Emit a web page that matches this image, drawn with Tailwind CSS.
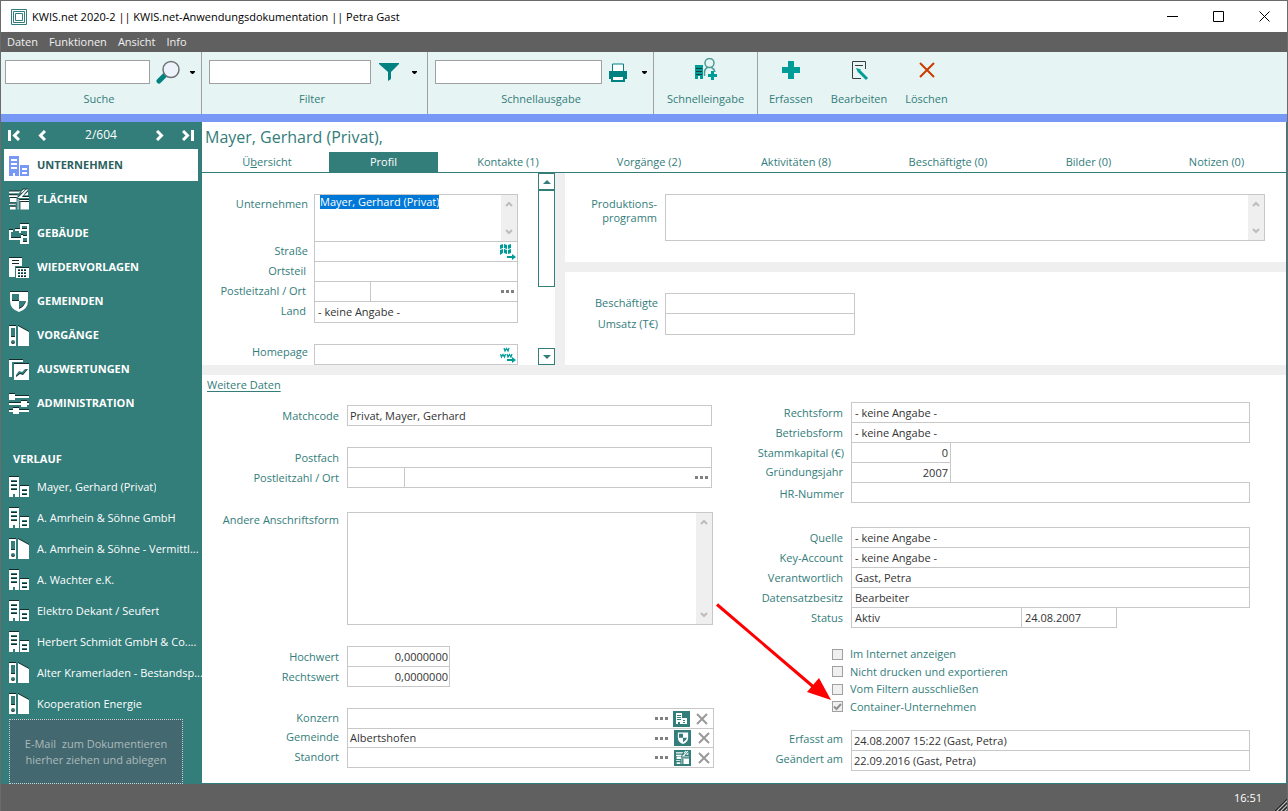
<!DOCTYPE html>
<html lang="de">
<head>
<meta charset="utf-8">
<title>KWIS.net 2020-2</title>
<script src="https://cdn.jsdelivr.net/npm/@tailwindcss/browser@4"></script>
</head>
<body class="font-['Open_Sans','Noto_Sans',sans-serif] text-[11px] leading-4 text-[#337d7a] bg-white">
<svg class="hidden" aria-hidden="true">
  <symbol id="building" viewBox="0 0 20 21"><path fill-rule="evenodd" d="M0 1h10v20H6v-3H4v3H0zM2 4v2h6V4zM2 8v2h6V8zM2 12v2h6v-2zM11 10h9v11h-9zM13 13v2h5v-2zM13 17v2h5v-2z"/></symbol>
  <symbol id="areas" viewBox="0 0 21 21"><path d="M0 2h12l-2 2H0zM0 6h9v2H0zM1 9h7v4H1zM0 15h7v1H0zM1 18h6v3H1zM9 9l3-3 6-6h2l-6 7v1h7v1H9zM9 10h1v11H9zM11 11h10v1H11zM12 13h9v8h-9zM16 6l4-4v4zM13 2l2-2h2l-4 4z"/></symbol>
  <symbol id="plan" viewBox="0 0 20 21"><path fill-rule="evenodd" d="M0 7h4v2H2v6h10v-3h2v1h4V8h-6v2h-2V8H6V6h5V1h9v20h-9v-4H0zM13 3v3h5V3zM14 15v4h4v-4z"/></symbol>
  <symbol id="tasks" viewBox="0 0 20 21"><path fill-rule="evenodd" d="M0 1h13v8h-2H6v11H0zM3 3v1h7V3zM3 6v1h7V6zM7 11h13v10H7zM9 12v2h2v-2zM12 12v2h2v-2zM15 12v2h2v-2zM9 15v2h2v-2zM12 15v2h2v-2zM15 15v2h2v-2zM9 18v2h2v-2zM12 18v2h2v-2zM15 18v2h2v-2z"/></symbol>
  <symbol id="shield" viewBox="0 0 20 21"><path fill-rule="evenodd" d="M1 1h18v9q0 8-9 11Q1 18 1 10zM3 3v7h7V3zM10 10v8q6-3 7-8z"/></symbol>
  <symbol id="folder" viewBox="0 0 20 21"><path fill-rule="evenodd" d="M0 1h7v20H0zM2 3v9h4V3zM2 17a2 2 0 1 0 4 0a2 2 0 1 0-4 0M9 1l11 6v14H9z"/></symbol>
  <symbol id="report" viewBox="0 0 20 21"><path fill-rule="evenodd" d="M0 1h14v2H3v15H0zM5 5h15v16H5zM7 18l4-3 3 1 5-6h-3l-3 3-3-1-3 4z"/></symbol>
  <symbol id="sliders" viewBox="0 0 20 21"><path d="M0 1h6v2h14v2H6v2H0zM0 10h12V8h6v2h2v2h-2v2h-6v-2H0zM0 17h4v-2h6v2h10v2H10v2H4v-2H0z"/></symbol>
  <symbol id="up" viewBox="0 0 8 6"><path d="M1 5l3-3 3 3" fill="none" stroke="currentColor" stroke-width="2"/></symbol>
  <symbol id="down" viewBox="0 0 8 6"><path d="M1 1l3 3 3-3" fill="none" stroke="currentColor" stroke-width="2"/></symbol>
  <symbol id="caret" viewBox="0 0 5 3"><path d="M0 0h5v1L3 3H2L0 1z"/></symbol>
  <symbol id="dots" viewBox="0 0 13 3"><path d="M0 0h3v3H0zM5 0h3v3H5zM10 0h3v3h-3z"/></symbol>
  <symbol id="cross" viewBox="0 0 12 12"><path d="M1 1l10 10M11 1L1 11" fill="none" stroke="currentColor" stroke-width="2"/></symbol>
</svg>

<div class="flex min-h-screen flex-col border-x border-[#6b6b6b]">
  <header class="flex h-8 items-center border-t border-[#6b6b6b] text-black">
    <svg class="ml-[10px] size-4 shrink-0" viewBox="0 0 16 16" fill="none" stroke="#337d7a"><path d="M.5.5h15v15H.5zM2.5 2.5h11v11h-11zM4.5 4.5h7v7h-7z"/></svg>
    <h1 class="ml-[5px] flex-1">KWIS.net 2020-2 || KWIS.net-Anwendungsdokumentation || Petra Gast</h1>
    <button class="flex w-[46px] justify-center" aria-label="Minimieren"><svg class="size-[11px]" viewBox="0 0 11 11"><path d="M0 5h11v1H0z"/></svg></button>
    <button class="flex w-[46px] justify-center" aria-label="Maximieren"><svg class="size-[11px]" viewBox="0 0 11 11" fill="none" stroke="#000"><path d="M.5.5h10v10H.5z"/></svg></button>
    <button class="flex w-[46px] justify-center" aria-label="Schließen"><svg class="size-[11px]" viewBox="0 0 11 11" stroke="#000"><path d="M.5.5l10 10M10.500.5l-10 10"/></svg></button>
  </header>
  <nav class="flex h-5 items-center gap-[11px] bg-[#606060] pl-[6px] text-[#f0f0f0]">
    <button>Daten</button><button>Funktionen</button><button>Ansicht</button><button>Info</button>
  </nav>

  <div class="flex h-[70px] border-b-8 border-[#7799f5] bg-[#e6f4f3]">
    <div class="flex w-[201px] shrink-0 flex-col gap-[7px] border-r border-r-[#a0a0a0] pt-2 pl-1">
      <div class="flex h-6 items-center">
        <input id="suche" class="h-6 w-[145px] border border-[#a0a0a0] bg-white px-1">
        <button class="ml-[6px]" aria-label="Suchen"><svg class="size-6" viewBox="0 0 24 24"><path d="M3 21l7-7" stroke="#008281" stroke-width="5" stroke-linecap="round"/><circle cx="15" cy="9.500" r="8" fill="#eef3fb" stroke="#6e7378" stroke-width="1.500"/></svg></button>
        <button class="ml-[10px]" aria-label="Suchoptionen"><svg class="h-[3px] w-[5px]"><use href="#caret"/></svg></button>
      </div>
      <label for="suche" class="pr-2 text-center">Suche</label>
    </div>
    <div class="flex w-[226px] shrink-0 flex-col gap-[7px] border-r border-r-[#a0a0a0] pt-2 pl-[7px]">
      <div class="flex h-6 items-center">
        <input id="filter" class="h-6 w-[162px] border border-[#a0a0a0] bg-white px-1">
        <button class="ml-2" aria-label="Filtern"><svg class="h-[18px] w-5" viewBox="0 0 20 18" fill="#008281"><path d="M0 0h20v1l-8 8v7l-3 2V9L0 1z"/></svg></button>
        <button class="ml-[13px]" aria-label="Filteroptionen"><svg class="h-[3px] w-[5px]"><use href="#caret"/></svg></button>
      </div>
      <label for="filter" class="pr-3 text-center">Filter</label>
    </div>
    <div class="flex w-[226px] shrink-0 flex-col gap-[7px] border-r border-r-[#a0a0a0] pt-2 pl-[7px]">
      <div class="flex h-6 items-center">
        <input id="ausgabe" class="h-6 w-[167px] border border-[#a0a0a0] bg-white px-1">
        <button class="ml-[7px]" aria-label="Drucken"><svg class="h-[19px] w-[18px]" viewBox="0 0 18 19"><path d="M3.500 1h11v9h-11z" fill="#fff" stroke="#008281"/><path d="M0 8h18v8h-2v3H2v-3H0z" fill="#008281"/><path d="M4 14h10v3H4z" fill="#fff"/></svg></button>
        <button class="ml-[15px]" aria-label="Druckoptionen"><svg class="h-[3px] w-[5px]"><use href="#caret"/></svg></button>
      </div>
      <label for="ausgabe" class="pr-[6px] text-center">Schnellausgabe</label>
    </div>
    <div class="flex w-[104px] shrink-0 justify-center border-r border-r-[#a0a0a0] pt-[6px]">
      <button class="flex flex-col items-center gap-2">
        <svg class="h-[25px] w-[22px]" viewBox="0 0 22 25" fill="none"><path d="M0 7h8v14H5v-3H3v3H0z" fill="#009c98"/><path d="M1 10.500h6M1 13.500h6M1 16.500h6" stroke="#1a3c3c"/><circle cx="14.500" cy="5" r="4.500" stroke="#4d9a97" stroke-width="1.500"/><path d="M9.500 18v-4q0-3 3-4.500M20 14q-.500-3-3.500-4.500" stroke="#4d9a97" stroke-width="1.500"/><path d="M16 13h3v3h3v3h-3v3h-3v-3h-3v-3h3z" fill="#009c98"/></svg>
        Schnelleingabe
      </button>
    </div>
    <div class="flex gap-[18px] pt-[6px] pl-[11px]">
      <button class="flex flex-col items-center gap-[9px]"><svg class="size-6" viewBox="0 0 24 24" fill="#009c98"><path d="M9 3h6v6h6v6h-6v6H9v-6H3V9h6z"/></svg>Erfassen</button>
      <button class="flex flex-col items-center gap-[9px]"><svg class="size-6" viewBox="0 0 24 24" fill="none"><path d="M18.500 11V3.500h-13v17H14" stroke="#3c3c3c"/><path d="M8 7.500h8" stroke="#3c3c3c"/><path d="M9 10l5 1.500-3 3z" fill="#009c98"/><path d="M12 13l8 8" stroke="#009c98" stroke-width="3"/></svg>Bearbeiten</button>
      <button class="flex flex-col items-center gap-[9px]"><svg class="size-6" viewBox="0 0 24 24" stroke="#cc3a00" stroke-width="2"><path d="M5 5l14 14M19 5L5 19"/></svg>Löschen</button>
    </div>
  </div>

  <div class="flex flex-1">
    <aside class="flex w-[201px] shrink-0 flex-col bg-[#337d7a] text-white">
      <div class="flex h-[26px] items-center justify-between pr-2 pl-[7px]">
        <div class="flex gap-[18px]">
          <button aria-label="Erster"><svg class="h-[11px] w-3" viewBox="0 0 12 11" fill="none" stroke="#fff" stroke-width="3"><path d="M1.500 0v11M11 1L6.500 5.500l4.500 4.500"/></svg></button>
          <button aria-label="Voriger"><svg class="h-[11px] w-2" viewBox="0 0 8 11" fill="none" stroke="#fff" stroke-width="3"><path d="M7 1L2.500 5.500 7 10"/></svg></button>
        </div>
        <span class="text-[12px]">2/604</span>
        <div class="flex gap-[18px]">
          <button aria-label="Nächster"><svg class="h-[11px] w-2" viewBox="0 0 8 11" fill="none" stroke="#fff" stroke-width="3"><path d="M1 1l4.500 4.500L1 10"/></svg></button>
          <button aria-label="Letzter"><svg class="h-[11px] w-3" viewBox="0 0 12 11" fill="none" stroke="#fff" stroke-width="3"><path d="M10.500 0v11M1 1l4.500 4.500L1 10"/></svg></button>
        </div>
      </div>
      <nav class="flex flex-col gap-[2px] pt-px pr-1 pl-[3px] font-bold">
        <a href="#" class="flex h-8 items-center gap-2 bg-white pl-[5px] text-[#2b5f60]"><svg class="h-[21px] w-5" fill="#7799f5"><use href="#building"/></svg>UNTERNEHMEN</a>
        <a href="#" class="flex h-8 items-center gap-2 pl-[5px]"><svg class="h-[21px] w-5 drop-shadow-[0_-1px_0_#142c2c]" fill="#fff"><use href="#areas"/></svg>FLÄCHEN</a>
        <a href="#" class="flex h-8 items-center gap-2 pl-[5px]"><svg class="h-[21px] w-5 drop-shadow-[0_-1px_0_#142c2c]" fill="#fff"><use href="#plan"/></svg>GEBÄUDE</a>
        <a href="#" class="flex h-8 items-center gap-2 pl-[5px]"><svg class="h-[21px] w-5 drop-shadow-[0_-1px_0_#142c2c]" fill="#fff"><use href="#tasks"/></svg>WIEDERVORLAGEN</a>
        <a href="#" class="flex h-8 items-center gap-2 pl-[5px]"><svg class="h-[21px] w-5 drop-shadow-[0_-1px_0_#142c2c]" fill="#fff"><use href="#shield"/></svg>GEMEINDEN</a>
        <a href="#" class="flex h-8 items-center gap-2 pl-[5px]"><svg class="h-[21px] w-5 drop-shadow-[0_-1px_0_#142c2c]" fill="#fff"><use href="#folder"/></svg>VORGÄNGE</a>
        <a href="#" class="flex h-8 items-center gap-2 pl-[5px]"><svg class="h-[21px] w-5 drop-shadow-[0_-1px_0_#142c2c]" fill="#fff"><use href="#report"/></svg>AUSWERTUNGEN</a>
        <a href="#" class="flex h-8 items-center gap-2 pl-[5px]"><svg class="h-[21px] w-5 drop-shadow-[0_-1px_0_#142c2c]" fill="#fff"><use href="#sliders"/></svg>ADMINISTRATION</a>
      </nav>
      <h2 class="mt-8 pl-3 font-bold">VERLAUF</h2>
      <nav class="mt-1 flex flex-col pl-2">
        <a href="#" class="flex h-[31px] items-center gap-2"><svg class="h-[21px] w-5 shrink-0 drop-shadow-[0_-1px_0_#142c2c]" fill="#fff"><use href="#building"/></svg><span class="truncate">Mayer, Gerhard (Privat)</span></a>
        <a href="#" class="flex h-[31px] items-center gap-2"><svg class="h-[21px] w-5 shrink-0 drop-shadow-[0_-1px_0_#142c2c]" fill="#fff"><use href="#building"/></svg><span class="truncate">A. Amrhein &amp; Söhne GmbH</span></a>
        <a href="#" class="flex h-[31px] items-center gap-2"><svg class="h-[21px] w-5 shrink-0 drop-shadow-[0_-1px_0_#142c2c]" fill="#fff"><use href="#folder"/></svg><span class="whitespace-nowrap">A. Amrhein &amp; Söhne - Vermittl...</span></a>
        <a href="#" class="flex h-[31px] items-center gap-2"><svg class="h-[21px] w-5 shrink-0 drop-shadow-[0_-1px_0_#142c2c]" fill="#fff"><use href="#building"/></svg><span class="truncate">A. Wachter e.K.</span></a>
        <a href="#" class="flex h-[31px] items-center gap-2"><svg class="h-[21px] w-5 shrink-0 drop-shadow-[0_-1px_0_#142c2c]" fill="#fff"><use href="#building"/></svg><span class="truncate">Elektro Dekant / Seufert</span></a>
        <a href="#" class="flex h-[31px] items-center gap-2"><svg class="h-[21px] w-5 shrink-0 drop-shadow-[0_-1px_0_#142c2c]" fill="#fff"><use href="#building"/></svg><span class="whitespace-nowrap">Herbert Schmidt GmbH &amp; Co....</span></a>
        <a href="#" class="flex h-[31px] items-center gap-2"><svg class="h-[21px] w-5 shrink-0 drop-shadow-[0_-1px_0_#142c2c]" fill="#fff"><use href="#folder"/></svg><span class="whitespace-nowrap">Alter Kramerladen - Bestandsp...</span></a>
        <a href="#" class="flex h-[31px] items-center gap-2"><svg class="h-[21px] w-5 shrink-0 drop-shadow-[0_-1px_0_#142c2c]" fill="#fff"><use href="#folder"/></svg><span class="truncate">Kooperation Energie</span></a>
      </nav>
      <div class="ml-2 flex h-[65px] w-[174px] flex-col items-center justify-center border border-dotted border-[#c8d8d8] bg-[#44686f] text-[#abb9bb]">
        <span class="whitespace-pre">E-Mail  zum Dokumentieren</span><span>hierher ziehen und ablegen</span>
      </div>
    </aside>

    <main class="flex min-w-0 flex-1 flex-col border-r border-b border-[#337d7a] bg-white">
      <h2 class="h-[30px] pl-[3px] text-[16px] leading-[30px]">Mayer, Gerhard (Privat),</h2>
      <div class="grid h-[21px] grid-cols-[127fr_109fr_140fr_142fr_152fr_152fr_129fr_133fr] border-b border-[#337d7a]">
        <button class="pl-[3px]">Ü<u>b</u>ersicht</button>
        <button class="bg-[#337d7a] text-white">Profil</button>
        <button>Kontakte (1)</button>
        <button>Vorgänge (2)</button>
        <button>Aktivitäten (8)</button>
        <button>Beschäftigte (0)</button>
        <button>Bilder (0)</button>
        <button class="pr-[6px]">Notizen (0)</button>
      </div>

      <div class="flex h-[202px] gap-[10px] border-b-[10px] border-[#efefef] bg-[#efefef] text-[#333]">
        <section class="flex w-[353px] shrink-0 bg-white">
          <div class="flex flex-1 flex-col overflow-hidden pt-[21px] pr-5">
            <div class="flex h-[47px]">
              <label for="unt" class="w-[112px] shrink-0 pt-[2px] pr-[6px] text-right text-[#337d7a]">Unternehmen</label>
              <div class="flex h-12 min-w-0 flex-1 border border-[#c8c8c8]">
                <textarea id="unt" class="min-w-0 flex-1 resize-none overflow-hidden pl-[5px] leading-[14px] caret-[#ff8800] outline-none selection:bg-[#0078d7] selection:text-white">Mayer, Gerhard (Privat)</textarea>
                <div class="flex w-4 flex-col items-center justify-between bg-[#efefef] py-[6px] text-[#bdbdbd]"><svg class="h-[6px] w-2"><use href="#up"/></svg><svg class="h-[6px] w-2"><use href="#down"/></svg></div>
              </div>
            </div>
            <div class="flex h-5">
              <label for="str" class="w-[112px] shrink-0 pt-[2px] pr-[6px] text-right text-[#337d7a]">Straße</label>
              <div class="flex h-[21px] min-w-0 flex-1 items-center border border-[#c8c8c8] pr-px">
                <input id="str" class="min-w-0 flex-1 px-1">
                <button aria-label="Karte"><svg class="size-4" viewBox="0 0 16 16" fill="#009c98"><path d="M0 1l3-1v4l-3 1zM0 6l3-1v4l-3 2zM4 0l3 1v4L4 4zM4 5l3 1v4L4 9zM8 1l3-1v4L8 5zM8 6l3-1v4l-3 1zM7 12h5v-2l4 3-4 3v-2H7z"/></svg></button>
              </div>
            </div>
            <div class="flex h-5">
              <label for="ort" class="w-[112px] shrink-0 pt-[2px] pr-2 text-right text-[#337d7a]">Ortsteil</label>
              <input id="ort" class="h-[21px] min-w-0 flex-1 border border-[#c8c8c8] px-1">
            </div>
            <div class="flex h-5">
              <label for="plz" class="w-[112px] shrink-0 pt-[2px] pr-2 text-right text-[#337d7a]">Postleitzahl / Ort</label>
              <div class="flex h-[21px] min-w-0 flex-1 items-center border border-[#c8c8c8] pr-[3px]">
                <input id="plz" class="h-full w-14 shrink-0 border-r border-[#c8c8c8] px-1">
                <input aria-label="Ort" class="min-w-0 flex-1 px-1">
                <button aria-label="Ort wählen"><svg class="h-[3px] w-[13px] fill-[#808080]"><use href="#dots"/></svg></button>
              </div>
            </div>
            <div class="flex h-[43px]">
              <label for="land" class="w-[112px] shrink-0 pt-[2px] pr-2 text-right text-[#337d7a]">Land</label>
              <select id="land" class="h-[22px] min-w-0 flex-1 appearance-none border border-[#c8c8c8] px-[3px]"><option>- keine Angabe -</option></select>
            </div>
            <div class="flex h-[21px]">
              <label for="home" class="w-[112px] shrink-0 pr-[6px] text-right text-[#337d7a]">Homepage</label>
              <div class="flex h-[21px] min-w-0 flex-1 items-center border border-[#c8c8c8] pr-px">
                <input id="home" class="min-w-0 flex-1 px-1">
                <button aria-label="Webseite öffnen"><svg class="size-4" viewBox="0 0 16 16" fill="none" stroke="#009c98"><path d="M4 1l1 3 1.500-2.500L8 4l1-3M.5 7l1 3L3 7.500 4.500 10l1-3M7 7l1 3 1.500-2.500L11 10l1-3" stroke-width="1.250"/><path d="M7 12h5v-2l4 3-4 3v-2H7z" fill="#009c98" stroke="none"/></svg></button>
              </div>
            </div>
          </div>
          <div class="flex w-[17px] flex-col justify-between">
            <div class="flex flex-col">
              <button class="flex h-[17px] items-center justify-center border border-[#337d7a]" aria-label="Nach oben"><svg class="h-[4px] w-[8px]" viewBox="0 0 8 4" fill="#337d7a"><path d="M4 0l4 4H0z"/></svg></button>
              <div class="h-[97px] border border-[#337d7a]"></div>
            </div>
            <button class="flex h-[17px] items-center justify-center border border-[#337d7a]" aria-label="Nach unten"><svg class="h-[4px] w-[8px]" viewBox="0 0 8 4" fill="#337d7a"><path d="M4 4l4-4H0z"/></svg></button>
          </div>
        </section>
        <div class="flex flex-1 flex-col gap-[10px]">
          <section class="flex h-[89px] bg-white pt-[21px] pr-[21px]">
            <label for="prod" class="w-[100px] shrink-0 pt-[3px] pr-2 text-right leading-[14px] text-[#337d7a]">Produktions-<br>programm</label>
            <div class="flex h-[47px] flex-1 border border-[#c8c8c8]">
              <textarea id="prod" class="min-w-0 flex-1 resize-none overflow-hidden px-1"></textarea>
              <div class="flex w-4 flex-col items-center justify-between bg-[#efefef] py-[6px] text-[#bdbdbd]"><svg class="h-[6px] w-2"><use href="#up"/></svg><svg class="h-[6px] w-2"><use href="#down"/></svg></div>
            </div>
          </section>
          <section class="flex-1 bg-white pt-[21px]">
            <div class="flex h-5">
              <label for="besch" class="w-[100px] pt-[2px] pr-[7px] text-right text-[#337d7a]">Beschäftigte</label>
              <input id="besch" class="h-[21px] w-[190px] border border-[#c8c8c8] px-1">
            </div>
            <div class="flex h-5">
              <label for="ums" class="w-[100px] pt-[3px] pr-[7px] text-right text-[#337d7a]">Umsatz (T€)</label>
              <input id="ums" class="h-[22px] w-[190px] border border-[#c8c8c8] px-1">
            </div>
          </section>
        </div>
      </div>

      <div class="grid flex-1 grid-cols-[518fr_566fr] text-[#333]">
        <section class="pr-[6px]">
          <a href="#" class="mt-[2px] ml-[5px] block w-fit text-[#337d7a] underline underline-offset-2">Weitere Daten</a>
          <div class="mt-3 flex h-[21px] pr-[2px]">
            <label for="match" class="w-[145px] pt-[3px] pr-2 text-right text-[#337d7a]">Matchcode</label>
            <input id="match" value="Privat, Mayer, Gerhard" class="h-[21px] min-w-0 flex-1 border border-[#c8c8c8] px-[2px]">
          </div>
          <div class="mt-[21px] flex h-5 pr-[2px]">
            <label for="pf" class="w-[145px] pt-[3px] pr-2 text-right text-[#337d7a]">Postfach</label>
            <input id="pf" class="h-[21px] min-w-0 flex-1 border border-[#c8c8c8] px-[2px]">
          </div>
          <div class="flex h-[21px] pr-[2px]">
            <label for="plz2" class="w-[145px] pt-[3px] pr-2 text-right text-[#337d7a]">Postleitzahl / Ort</label>
            <div class="flex min-w-0 flex-1 items-center border border-[#c8c8c8] pr-[3px]">
              <input id="plz2" class="h-full w-[57px] shrink-0 border-r border-[#c8c8c8] px-[2px]">
              <input aria-label="Ort" class="min-w-0 flex-1 px-[2px]">
              <button aria-label="Ort wählen"><svg class="h-[3px] w-[13px] fill-[#808080]"><use href="#dots"/></svg></button>
            </div>
          </div>
          <div class="mt-6 flex h-[113px] pr-px">
            <label for="and" class="w-[145px] pr-2 text-right text-[#337d7a]">Andere Anschriftsform</label>
            <div class="flex flex-1 border border-[#c8c8c8]">
              <textarea id="and" class="min-w-0 flex-1 resize-none overflow-hidden px-[2px]"></textarea>
              <div class="flex w-4 flex-col items-center justify-between bg-[#efefef] py-[6px] text-[#bdbdbd]"><svg class="h-[6px] w-2"><use href="#up"/></svg><svg class="h-[6px] w-2"><use href="#down"/></svg></div>
            </div>
          </div>
          <div class="mt-[21px] flex h-5">
            <label for="hw" class="w-[145px] pt-[3px] pr-2 text-right text-[#337d7a]">Hochwert</label>
            <input id="hw" value="0,0000000" class="h-[21px] w-[103px] border border-[#c8c8c8] px-px text-right">
          </div>
          <div class="flex h-[21px]">
            <label for="rw" class="w-[145px] pt-[3px] pr-2 text-right text-[#337d7a]">Rechtswert</label>
            <input id="rw" value="0,0000000" class="h-[21px] w-[103px] border border-[#c8c8c8] px-px text-right">
          </div>
          <div class="mt-[21px] flex h-5">
            <label for="konz" class="w-[145px] pt-[2px] pr-2 text-right text-[#337d7a]">Konzern</label>
            <div class="flex h-[21px] flex-1 items-center border border-[#c8c8c8] pr-[5px]">
              <input id="konz" class="min-w-0 flex-1 px-[2px]">
              <button aria-label="Konzern wählen"><svg class="h-[3px] w-[13px] fill-[#808080]"><use href="#dots"/></svg></button>
              <button class="ml-[5px] flex h-4 w-[17px] items-center justify-center bg-[#337d7a]" aria-label="Konzern öffnen"><svg class="h-[11px] w-[11px]" viewBox="0 0 11 11" fill="#fff"><path fill-rule="evenodd" d="M0 0h6v11H4V9H2v2H0zM1 2v1h4V2zM1 4v1h4V4zM1 6v1h4V6zM6 5h5v6H6zM7 7v1h2V7zM7 9v1h2V9z"/></svg></button>
              <button class="ml-[6px] text-[#999]" aria-label="Konzern entfernen"><svg class="size-3"><use href="#cross"/></svg></button>
            </div>
          </div>
          <div class="flex h-[19px]">
            <label for="gem" class="w-[145px] pt-px pr-2 text-right text-[#337d7a]">Gemeinde</label>
            <div class="flex h-5 flex-1 items-center border border-[#c8c8c8] pr-[3px]">
              <input id="gem" value="Albertshofen" class="min-w-0 flex-1 px-[2px]">
              <button aria-label="Gemeinde wählen"><svg class="h-[3px] w-[13px] fill-[#808080]"><use href="#dots"/></svg></button>
              <button class="ml-[6px] flex h-4 w-[17px] items-center justify-center bg-[#337d7a]" aria-label="Gemeinde öffnen"><svg class="h-3 w-3" fill="#fff"><use href="#shield"/></svg></button>
              <button class="ml-[7px] text-[#999]" aria-label="Gemeinde entfernen"><svg class="size-3"><use href="#cross"/></svg></button>
            </div>
          </div>
          <div class="flex h-[21px]">
            <label for="sta" class="w-[145px] pt-[2px] pr-2 text-right text-[#337d7a]">Standort</label>
            <div class="flex flex-1 items-center border border-[#c8c8c8] pr-[3px]">
              <input id="sta" class="min-w-0 flex-1 px-[2px]">
              <button aria-label="Standort wählen"><svg class="h-[3px] w-[13px] fill-[#808080]"><use href="#dots"/></svg></button>
              <button class="ml-[6px] flex h-4 w-[17px] items-center justify-center bg-[#337d7a]" aria-label="Standort öffnen"><svg class="h-[13px] w-[13px]" fill="#fff"><use href="#areas"/></svg></button>
              <button class="ml-[7px] text-[#999]" aria-label="Standort entfernen"><svg class="size-3"><use href="#cross"/></svg></button>
            </div>
          </div>
        </section>

        <section class="relative pt-[27px] pr-[36px]">
          <svg class="pointer-events-none absolute top-[226px] -left-[6px] h-[102px] w-[120px]" viewBox="0 0 120 102"><path d="M3 3.500l96 82" stroke="#f00" stroke-width="3"/><path d="M117 99l-24-8 12-14z" fill="#f00"/></svg>
          <div class="flex h-5">
            <label for="rf" class="w-[131px] pt-[3px] pr-2 text-right text-[#337d7a]">Rechtsform</label>
            <select id="rf" class="h-[21px] flex-1 appearance-none border border-[#c8c8c8] px-[3px]"><option>- keine Angabe -</option></select>
          </div>
          <div class="flex h-5">
            <label for="bf" class="w-[131px] pt-[3px] pr-2 text-right text-[#337d7a]">Betriebsform</label>
            <select id="bf" class="h-[21px] flex-1 appearance-none border border-[#c8c8c8] px-[3px]"><option>- keine Angabe -</option></select>
          </div>
          <div class="flex h-5">
            <label for="sk" class="w-[131px] pt-[3px] pr-[7px] text-right text-[#337d7a]">Stammkapital (€)</label>
            <input id="sk" value="0" class="h-[21px] w-[100px] border border-[#c8c8c8] px-[2px] text-right">
          </div>
          <div class="flex h-5">
            <label for="gj" class="w-[131px] pt-[2px] pr-2 text-right text-[#337d7a]">Gründungsjahr</label>
            <input id="gj" value="2007" class="h-[21px] w-[100px] border border-[#c8c8c8] px-[2px] text-right">
          </div>
          <div class="flex h-[21px]">
            <label for="hr" class="w-[131px] pt-1 pr-[7px] text-right text-[#337d7a]">HR-Nummer</label>
            <input id="hr" class="h-[21px] min-w-0 flex-1 border border-[#c8c8c8] px-[3px]">
          </div>
          <div class="mt-6 flex h-5">
            <label for="qu" class="w-[131px] pt-[3px] pr-2 text-right text-[#337d7a]">Quelle</label>
            <select id="qu" class="h-[21px] flex-1 appearance-none border border-[#c8c8c8] px-[3px]"><option>- keine Angabe -</option></select>
          </div>
          <div class="flex h-5">
            <label for="ka" class="w-[131px] pt-[3px] pr-2 text-right text-[#337d7a]">Key-Account</label>
            <select id="ka" class="h-[21px] flex-1 appearance-none border border-[#c8c8c8] px-[3px]"><option>- keine Angabe -</option></select>
          </div>
          <div class="flex h-5">
            <label for="va" class="w-[131px] pt-[3px] pr-2 text-right text-[#337d7a]">Verantwortlich</label>
            <select id="va" class="h-[21px] flex-1 appearance-none border border-[#c8c8c8] px-[3px]"><option>Gast, Petra</option></select>
          </div>
          <div class="flex h-5">
            <label for="db" class="w-[131px] pt-[3px] pr-2 text-right text-[#337d7a]">Datensatzbesitz</label>
            <select id="db" class="h-[21px] flex-1 appearance-none border border-[#c8c8c8] px-[3px]"><option>Bearbeiter</option></select>
          </div>
          <div class="flex h-[21px]">
            <label for="st" class="w-[131px] pt-[3px] pr-2 text-right text-[#337d7a]">Status</label>
            <select id="st" class="h-[21px] w-[170px] appearance-none border border-r-0 border-[#c8c8c8] px-[3px]"><option>Aktiv</option></select>
            <input aria-label="Statusdatum" value="24.08.2007" class="h-[21px] w-24 border border-[#c8c8c8] px-[3px]">
          </div>
          <div class="mt-[17px] ml-[112px] flex flex-col text-[#337d7a]">
            <label class="flex h-[18px] items-center gap-[7px]"><input type="checkbox" class="size-[11px] appearance-none border border-[#a0a0a0] bg-[#f0f0f0]">Im Internet anzeigen</label>
            <label class="flex h-[17px] items-center gap-[7px]"><input type="checkbox" class="size-[11px] appearance-none border border-[#a0a0a0] bg-[#f0f0f0]">Nicht drucken und exportieren</label>
            <label class="flex h-[18px] items-center gap-[7px]"><input type="checkbox" class="size-[11px] appearance-none border border-[#a0a0a0] bg-[#f0f0f0]">Vom Filtern ausschließen</label>
            <label class="flex h-[17px] items-center gap-[7px]"><span class="grid"><input type="checkbox" checked class="peer size-[11px] appearance-none border border-[#a0a0a0] bg-[#f0f0f0] [grid-area:1/1]"><svg class="pointer-events-none invisible size-[11px] peer-checked:visible [grid-area:1/1]" viewBox="0 0 11 11" fill="none" stroke="#909090" stroke-width="2"><path d="M2 5.500l2.500 2.500L9 3"/></svg></span>Container-Unternehmen</label>
          </div>
          <div class="mt-[15px] flex h-5">
            <label for="ea" class="w-[131px] pt-px pr-2 text-right text-[#337d7a]">Erfasst am</label>
            <input id="ea" value="24.08.2007 15:22 (Gast, Petra)" class="h-[21px] min-w-0 flex-1 border border-[#c8c8c8] px-[2px]">
          </div>
          <div class="flex h-[21px]">
            <label for="ga" class="w-[131px] pt-px pr-2 text-right text-[#337d7a]">Geändert am</label>
            <input id="ga" value="22.09.2016 (Gast, Petra)" class="h-[21px] min-w-0 flex-1 border border-[#c8c8c8] px-[2px]">
          </div>
        </section>
      </div>
    </main>
  </div>

  <footer class="relative flex h-[27px] items-center justify-end bg-[#606060] pr-[25px] text-white">
    16:51
    <svg class="absolute right-0 bottom-0 size-3" viewBox="0 0 12 12" stroke-width="1"><path d="M0 12L12 0M4 12l8-8M8 12l4-4" stroke="#222"/><path d="M2 12L12 2M6 12l6-6M10 12l2-2" stroke="#bbb"/></svg>
  </footer>
</div>
<script>
  const companyField = document.getElementById('unt');
  companyField.focus({ preventScroll: true });
  companyField.select();
</script>
</body>
</html>
